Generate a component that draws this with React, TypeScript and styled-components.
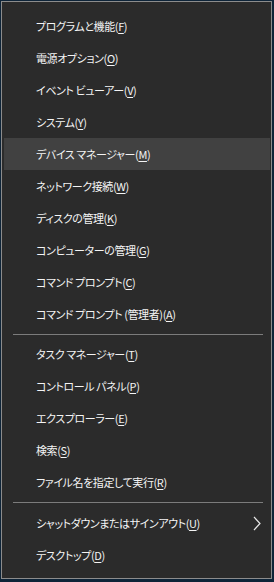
import * as React from 'react';
import styled, { createGlobalStyle } from 'styled-components';

const GlobalStyle = createGlobalStyle`
  html, body {
    margin: 0;
    padding: 0;
    background: #0e2438;
  }
  body {
    font-family: "Noto Sans CJK JP", "Noto Sans", sans-serif;
  }
`;

type Entry =
  | { kind: 'item'; label: string; key: string; active?: boolean; submenu?: boolean }
  | { kind: 'separator' };

const entries: Entry[] = [
  { kind: 'item', label: 'プログラムと機能', key: 'F' },
  { kind: 'item', label: '電源オプション', key: 'O' },
  { kind: 'item', label: 'イベント ビューアー', key: 'V' },
  { kind: 'item', label: 'システム', key: 'Y' },
  { kind: 'item', label: 'デバイス マネージャー', key: 'M', active: true },
  { kind: 'item', label: 'ネットワーク接続', key: 'W' },
  { kind: 'item', label: 'ディスクの管理', key: 'K' },
  { kind: 'item', label: 'コンピューターの管理', key: 'G' },
  { kind: 'item', label: 'コマンド プロンプト', key: 'C' },
  { kind: 'item', label: 'コマンド プロンプト (管理者)', key: 'A' },
  { kind: 'separator' },
  { kind: 'item', label: 'タスク マネージャー', key: 'T' },
  { kind: 'item', label: 'コントロール パネル', key: 'P' },
  { kind: 'item', label: 'エクスプローラー', key: 'E' },
  { kind: 'item', label: '検索', key: 'S' },
  { kind: 'item', label: 'ファイル名を指定して実行', key: 'R' },
  { kind: 'separator' },
  { kind: 'item', label: 'シャットダウンまたはサインアウト', key: 'U', submenu: true },
  { kind: 'item', label: 'デスクトップ', key: 'D' },
];

function Chevron() {
  return (
    <svg width="8" height="15" viewBox="0 0 8 15">
      <path d="M1 1 L7 7.5 L1 14" fill="none" stroke="#e6e6e6" strokeWidth="1.2" />
    </svg>
  );
}

export default function App() {
  return (
    <>
      <GlobalStyle />
      <Menu>
        {entries.map((e, i) =>
          e.kind === 'separator' ? (
            <Separator key={i} $tall={i > 12} />
          ) : (
            <Row key={i} $active={!!e.active}>
              <Label>
                {e.label}(<u>{e.key}</u>)
              </Label>
              {e.submenu && (
                <Arrow>
                  <Chevron />
                </Arrow>
              )}
            </Row>
          )
        )}
      </Menu>
    </>
  );
}

const Menu = styled.div`
  margin: 1px 0 0 1px;
  border: 1px solid #8c8c8c;
  background: #2b2b2b;
  padding: 8px 0 0 0;
  box-sizing: border-box;
  width: 271px;
  height: 578px;
  display: flex;
  flex-direction: column;
`;

const Row = styled.div<{ $active: boolean }>`
  position: relative;
  height: 32px;
  margin: 0 1px 0 2px;
  padding-left: 32px;
  display: flex;
  align-items: center;
  background: ${(p) => (p.$active ? '#414141' : 'transparent')};
  color: #f4f4f4;
`;

const Label = styled.span`
  font-size: 11px;
  letter-spacing: -0.4px;
  line-height: 1;
  font-feature-settings: 'palt';
  white-space: nowrap;

  u {
    text-underline-offset: 2px;
  }
`;

const Arrow = styled.span`
  position: absolute;
  right: 9px;
  top: 9px;
  display: flex;
`;

const Separator = styled.div<{ $tall: boolean }>`
  height: ${(p) => (p.$tall ? 9 : 8)}px;
  display: flex;
  align-items: center;
  padding: 0 8px 0 11px;

  &::after {
    content: '';
    flex: 1;
    height: 1px;
    background: #7c7c7c;
  }
`;
